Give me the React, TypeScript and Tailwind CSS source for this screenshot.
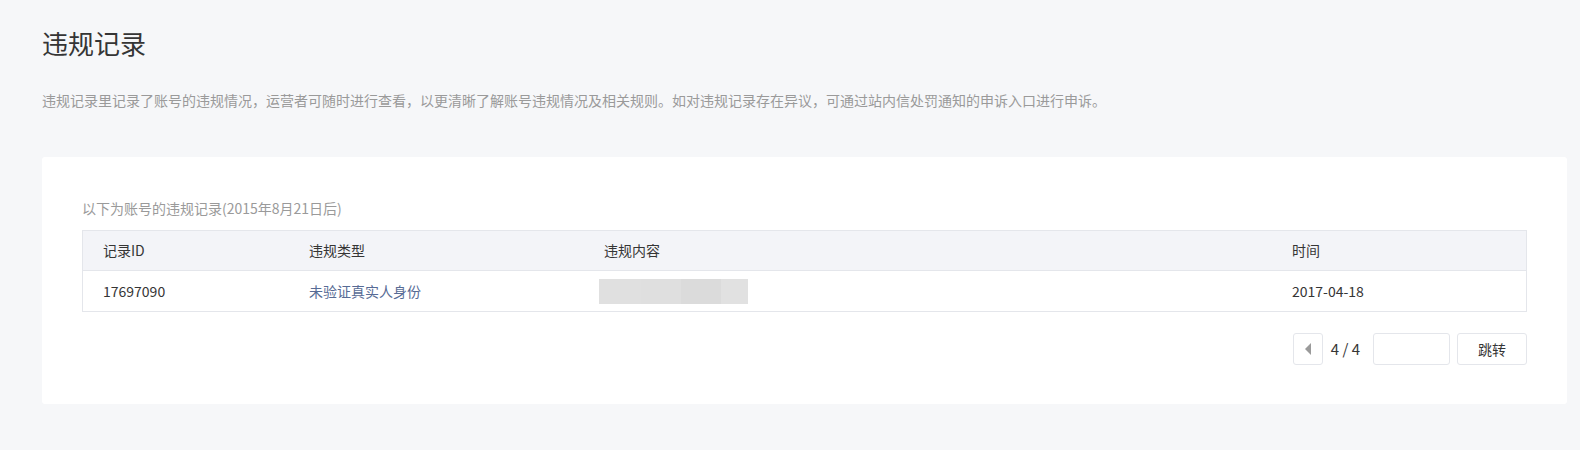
import React from "react";

export default function App() {
  const font = { fontFamily: '"Noto Sans CJK SC", "Noto Sans", sans-serif' };
  return (
    <div className="min-h-[450px] w-[1580px] bg-[#f6f7f9] text-[#353535]" style={font}>
      <div className="pl-[42px] pt-[26px]">
        <h1 className="text-[26px] leading-[34px] font-normal text-[#353535]">违规记录</h1>
        <p className="mt-[30px] text-[14px] leading-[20px] text-[#9a9a9a]">
          违规记录里记录了账号的违规情况，运营者可随时进行查看，以更清晰了解账号违规情况及相关规则。如对违规记录存在异议，可通过站内信处罚通知的申诉入口进行申诉。
        </p>
      </div>
      <div className="ml-[42px] mr-[13px] mt-[47px] rounded-[3px] bg-white px-[40px] pt-[41px] pb-[39px]">
        <p className="mb-3 text-[14px] leading-[20px] text-[#9a9a9a]">以下为账号的违规记录(2015年8月21日后)</p>
        <div className="border border-[#e4e6eb] text-[14px]">
          <div className="flex h-[40px] items-center bg-[#f3f4f8] border-b border-[#e4e6eb]">
            <div className="w-[205px] pl-[20px]">记录ID</div>
            <div className="w-[295px] pl-[21px]">违规类型</div>
            <div className="w-[688px] pl-[21px]">违规内容</div>
            <div className="flex-1 pl-[21px]">时间</div>
          </div>
          <div className="flex h-[40px] items-center">
            <div className="w-[205px] pl-[20px]">17697090</div>
            <div className="w-[295px] pl-[21px] text-[#576b95]">未验证真实人身份</div>
            <div className="w-[688px] pl-[16px]">
              <div className="flex h-[25px] w-[149px]">
                <div className="w-[42px] bg-[#e0e0e0]" />
                <div className="w-[40px] bg-[#dfdfdf]" />
                <div className="w-[40px] bg-[#dbdbdb]" />
                <div className="flex-1 bg-[#e1e1e1]" />
              </div>
            </div>
            <div className="flex-1 pl-[21px]">2017-04-18</div>
          </div>
        </div>
        <div className="mt-[21px] flex h-[32px] items-center justify-end text-[14px]">
          <button className="flex h-[32px] w-[30px] items-center justify-center rounded-[3px] border border-[#e4e6eb] bg-white">
            <span className="block h-0 w-0 border-y-[6px] border-r-[6px] border-y-transparent border-r-[#9a9a9a]" />
          </button>
          <span className="ml-[8px] mr-[13px] text-[15px] text-[#353535]">4 / 4</span>
          <input className="h-[32px] w-[77px] rounded-[3px] border border-[#e4e6eb] bg-white outline-none" />
          <button className="ml-[7px] h-[32px] w-[70px] rounded-[3px] border border-[#e4e6eb] bg-white text-[14px] text-[#353535]">
            跳转
          </button>
        </div>
      </div>
    </div>
  );
}
